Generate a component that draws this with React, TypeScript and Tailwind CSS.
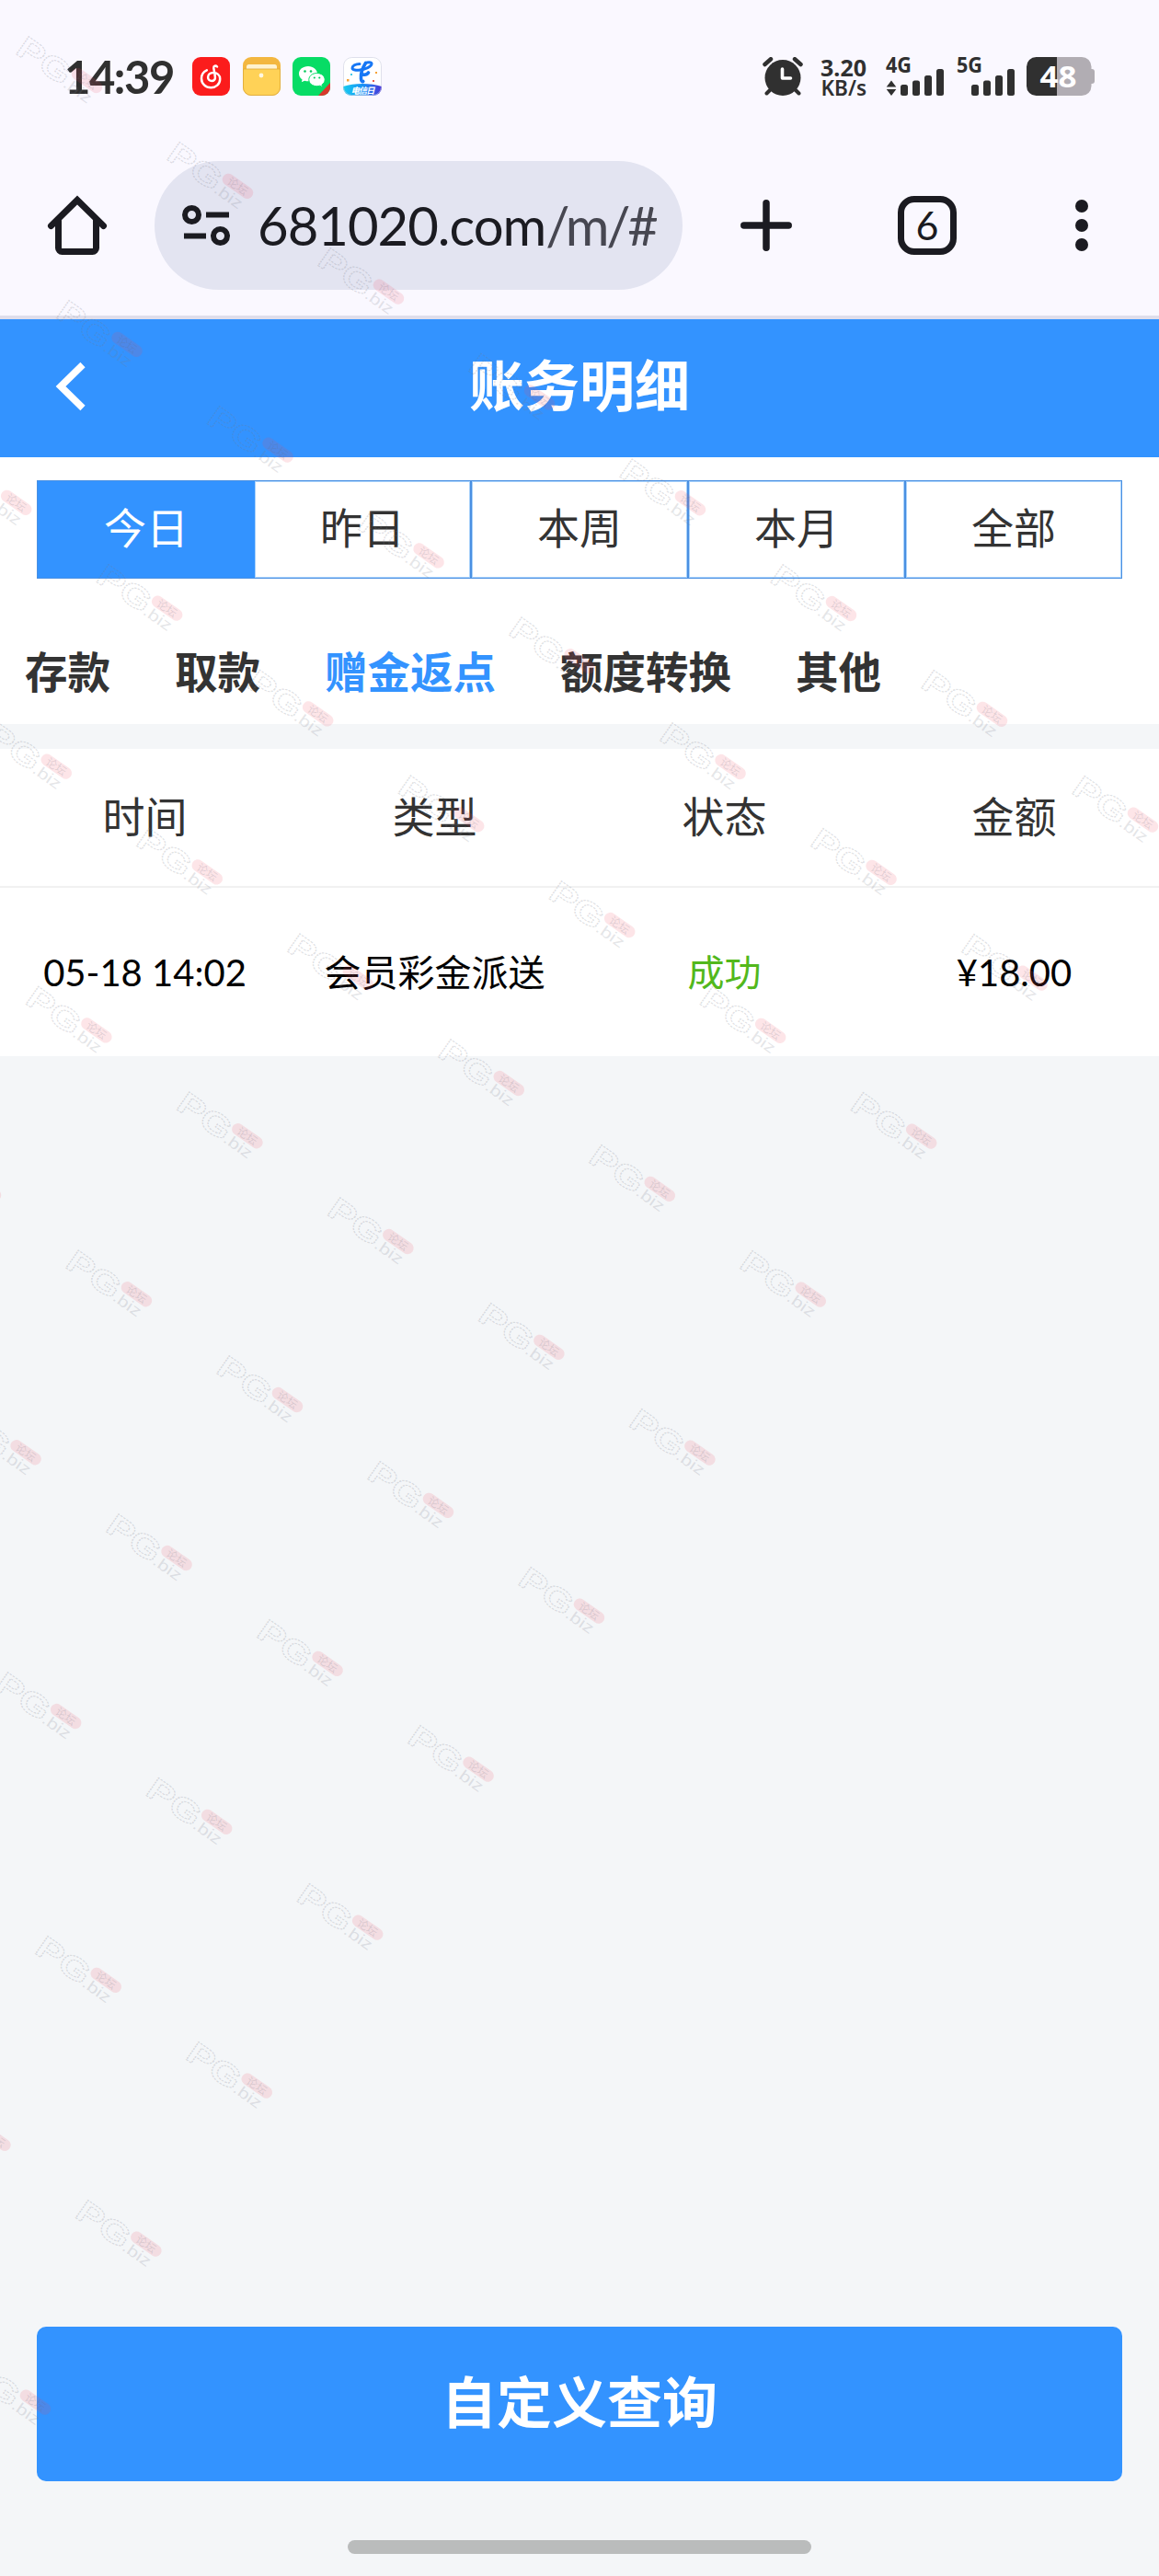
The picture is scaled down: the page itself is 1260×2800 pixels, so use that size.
import { clsx } from 'clsx'

const RANGES = ['今日', '昨日', '本周', '本月', '全部']
const CATEGORIES = ['存款', '取款', '赠金返点', '额度转换', '其他']
const COLUMNS = ['时间', '类型', '状态', '金额']

interface RecordEntry {
  time: string
  type: string
  status: string
  amount: string
}

const RECORDS: RecordEntry[] = [
  { time: '05-18 14:02', type: '会员彩金派送', status: '成功', amount: '¥18.00' },
]

// [first, last] stamp on each diagonal of the watermark
const STAMP_RUNS = [
  [0, 7], [0, 6], [-1, 5], [-1, 4], [-1, 3], [-2, 2], [-2, 1], [-2, 0], [-2, -1], [-3, -2], [-3, -3],
]

function getStamps() {
  return STAMP_RUNS.flatMap(([from, to], row) =>
    Array.from({ length: to - from + 1 }, (_, i) => ({
      x: 18 + row * 43.6 + (from + i) * 164,
      y: 38 + row * 286.8 + (from + i) * 114.8,
    })),
  )
}

function Watermark() {
  return (
    <svg
      className="absolute inset-0 pointer-events-none"
      width="1260"
      height="2800"
      viewBox="0 0 1260 2800"
      fontFamily="'Liberation Sans', 'Noto Sans CJK SC', sans-serif"
    >
      {getStamps().map(({ x, y }) => (
        <g key={`${x}-${y}`} transform={`translate(${x} ${y + 21}) rotate(35)`}>
          <g fill="none" stroke="#777b88" strokeOpacity="0.24" strokeWidth="1.2" strokeDasharray="2 1">
            <text x="-3" y="0" fontSize="34" fontWeight="700" textLength="64" lengthAdjust="spacingAndGlyphs">PG</text>
          </g>
          <rect x="60" y="-27" width="38" height="13" rx="6.5" fill="#f0465a" fillOpacity="0.14" />
          <text x="67" y="-16" fontSize="12" fill="#666b78" fillOpacity="0.2">论坛</text>
          <text x="60" y="0" fontSize="17" fill="#777b88" fillOpacity="0.2" textLength="34" lengthAdjust="spacingAndGlyphs">.biz</text>
        </g>
      ))}
    </svg>
  )
}

function MusicIcon() {
  return (
    <svg width="41" height="42" viewBox="0 0 41 42">
      <rect width="41" height="42" rx="9" fill="#fb1c1c" />
      <path
        d="M27 10.500c-1.500-1.600-4-.9-3.700 1.500l1.600 9.500c.5 3-1.600 4.500-3.800 4.500s-4-1.600-4-4c0-3.200 2.700-5 5.700-5 4.300 0 7.400 2.600 7.400 6.800 0 5.700-4.500 9.400-9.700 9.400-6.100 0-10.500-4.300-10.500-10 0-4.200 2.300-7.300 5.800-8.900"
        fill="none"
        stroke="#fff"
        strokeWidth="2.500"
        strokeLinecap="round"
      />
    </svg>
  )
}

function WalletIcon() {
  return (
    <svg width="41" height="42" viewBox="0 0 41 42">
      <rect width="41" height="42" rx="9" fill="#f3b740" />
      <rect x="4" y="8" width="33" height="10" rx="2.500" fill="#fff2cf" />
      <path d="M.5 13h40v20a8.500 8.500 0 0 1-8.500 8.500H9A8.500 8.500 0 0 1 .5 33z" fill="#ffd257" stroke="#dda93a" strokeWidth=".8" />
      <circle cx="20" cy="20" r="2.400" fill="#fff8e2" />
    </svg>
  )
}

function ChatIcon() {
  return (
    <svg width="41" height="42" viewBox="0 0 41 42">
      <defs>
        <clipPath id="chat"><rect width="41" height="42" rx="9" /></clipPath>
      </defs>
      <g clipPath="url(#chat)">
        <rect width="41" height="42" fill="#07dc65" />
        <path d="M41 28v14H28z" fill="#d8382c" />
        <path d="M17 10c-5.800 0-10 3.600-10 8.200 0 2.600 1.400 4.800 3.600 6.300l-.8 2.800 3.400-1.600c1.200.4 2.400.6 3.800.6 5.600 0 10-3.600 10-8.100S22.600 10 17 10z" fill="#fff" />
        <path d="M26.500 17.500c-5 0-8.700 3.200-8.700 7.100s3.700 7.100 8.700 7.100c1.100 0 2.200-.2 3.100-.5l3 1.500-.7-2.500c2-1.300 3.300-3.300 3.300-5.600 0-3.900-3.700-7.100-8.700-7.100z" fill="#fff" stroke="#07dc65" strokeWidth="1" />
        <g fill="#07c95c">
          <circle cx="13.500" cy="15.500" r="1.300" />
          <circle cx="20" cy="15.500" r="1.300" />
          <circle cx="23.800" cy="22.500" r="1.100" />
          <circle cx="29.300" cy="22.500" r="1.100" />
        </g>
      </g>
    </svg>
  )
}

function TelecomIcon() {
  return (
    <svg width="42" height="42" viewBox="0 0 42 42">
      <defs>
        <clipPath id="telecom"><rect width="42" height="42" rx="9" /></clipPath>
        <linearGradient id="telecomBand">
          <stop offset="0" stopColor="#16cdf0" />
          <stop offset=".55" stopColor="#1a8cf5" />
          <stop offset="1" stopColor="#4a35d8" />
        </linearGradient>
      </defs>
      <g clipPath="url(#telecom)">
        <rect width="42" height="42" fill="#fff" />
        <path d="M0 32c12-4 30-4 42 0v10H0z" fill="url(#telecomBand)" />
        <g fill="none" stroke="#1677f5" strokeLinecap="round">
          <path d="M18 7.500c-4.500 0-8 2-8 4.500 0 2.200 4.500 2.500 8.500 2 6-.8 12-3.500 12.500-6.500.2-1.600-2-2-5-1.500" strokeWidth="3" />
          <path d="M24.500 6.500c-3.500 5.500-5.500 12-5 17 .3 2.600 1.300 3.700 2.300 3M21.500 19c2.500.5 5-.5 6-2" strokeWidth="3.600" />
        </g>
        <g fill="#f6a235">
          <rect x="4" y="24" width="2.500" height="2.500" />
          <rect x="35" y="16" width="2" height="2" />
          <rect x="32" y="25" width="2" height="2" fill="#e95b4e" />
          <rect x="8" y="18" width="2" height="2" fill="#43c9e8" />
        </g>
      </g>
      <rect x=".5" y=".5" width="41" height="41" rx="9" fill="none" stroke="#c9cbe0" strokeOpacity=".6" />
      <text x="8.500" y="40.300" fontSize="9.500" fontWeight="700" fill="#fff" textLength="26" fontStyle="italic" fontFamily="'Noto Sans CJK SC', sans-serif">电信日</text>
    </svg>
  )
}

function AlarmIcon() {
  return (
    <svg width="44" height="42" viewBox="0 0 44 42">
      <g stroke="#303030" strokeLinecap="round" fill="none">
        <path d="M2.500 8 9 2.200M41.500 8 35 2.200" strokeWidth="4.500" />
        <path d="m9 35-4.500 4.500M35 35l4.500 4.500" strokeWidth="4" />
      </g>
      <circle cx="22" cy="22.500" r="19.500" fill="#303030" />
      <path d="M21.500 13v10h9" fill="none" stroke="#fff" strokeWidth="3.600" strokeLinecap="round" strokeLinejoin="round" />
    </svg>
  )
}

function Signal({ label, arrows }: { label: string; arrows?: boolean }) {
  return (
    <svg className="overflow-visible" width="66" height="44" viewBox="0 0 66 44" fill="#303030">
      <text x="0" y="16.500" fontSize="22.500" fontWeight="700" textLength="28" lengthAdjust="spacingAndGlyphs" fontFamily="'Noto Sans', sans-serif">{label}</text>
      {arrows && <path d="M6 25.500 11.300 32.500H.7zM6 42 11.300 35H.7z" />}
      <rect x="16" y="30" width="8" height="12" rx="2.500" />
      <rect x="29" y="25.500" width="8" height="16.500" rx="2.500" />
      <rect x="42" y="20" width="8" height="22" rx="2.500" />
      <rect x="55" y="13" width="8" height="29" rx="2.500" />
    </svg>
  )
}

function Battery() {
  return (
    <svg className="overflow-visible" width="74" height="42" viewBox="0 0 74 42">
      <path d="M68 13h3a3 3 0 0 1 3 3v10a3 3 0 0 1-3 3h-3z" fill="#b1adb3" />
      <path d="M33 0h27a10.500 10.500 0 0 1 10.500 10.500v21A10.500 10.500 0 0 1 60 42H33z" fill="#b1adb3" />
      <path d="M33 0H10.500A10.500 10.500 0 0 0 0 10.500v21A10.500 10.500 0 0 0 10.500 42H33z" fill="#303030" />
      <text x="14.500" y="33" fontSize="33" fontWeight="700" fill="#fff" textLength="40" lengthAdjust="spacingAndGlyphs" fontFamily="'Noto Sans', sans-serif">48</text>
    </svg>
  )
}

function StatusBar() {
  return (
    <div className="flex h-[150px] items-start pt-[62px] pl-[70px] pr-[70px]">
      <span className="w-[139px] shrink-0 font-['Lato'] text-[49px] font-bold leading-[42px] tracking-[-1.500px] text-[#303030]">14:39</span>
      <div className="flex gap-[13.500px]">
        <MusicIcon />
        <WalletIcon />
        <ChatIcon />
        <TelecomIcon />
      </div>
      <div className="ml-auto flex items-start">
        <AlarmIcon />
        <div className="ml-[17px] w-[53px] pr-[1px] text-right font-['Noto_Sans'] font-bold text-[#303030]">
          <div className="text-[25px] leading-[23px]">3.20</div>
          <div className="text-[22.500px] font-semibold leading-[22px]">KB/s</div>
        </div>
        <div className="ml-[20px]"><Signal label="4G" arrows /></div>
        <div className="ml-[11px]"><Signal label="5G" /></div>
        <div className="ml-[10px]"><Battery /></div>
      </div>
    </div>
  )
}

function BrowserBar() {
  return (
    <div className="flex h-[193px] items-start pl-[51px]">
      <svg className="mt-[62px] shrink-0" width="66" height="66" viewBox="0 0 66 66" fill="none" stroke="#1b1b21" strokeWidth="7" strokeLinecap="round">
        <path d="M4.500 33.500 33 5.500l28.500 28" />
        <path d="M12.500 28v29.500a4 4 0 0 0 4 4h33a4 4 0 0 0 4-4V28" />
      </svg>
      <div className="ml-[51px] mt-[25px] flex h-[140px] w-[574px] shrink-0 items-center rounded-full bg-[#e3e4f1] pl-[30px]">
        <svg className="shrink-0" width="54" height="44" viewBox="0 0 54 44" fill="none" stroke="#1b1b21" strokeWidth="6">
          <circle cx="10.500" cy="10.500" r="7.500" />
          <path d="M26 10.500h25M2 33.500h24" />
          <circle cx="41.500" cy="33.500" r="7.500" />
        </svg>
        <div className="ml-[28px] w-[434px] overflow-hidden whitespace-nowrap font-['Lato'] text-[58px] leading-[80px] tracking-[-1px] text-[#1b1b21]">
          681020.com<span className="tracking-[-3.200px] text-[#474751]">/m/#/</span>
        </div>
      </div>
      <svg className="ml-[62px] mt-[66px] shrink-0" width="58" height="58" viewBox="0 0 58 58" stroke="#1b1b21" strokeWidth="7.500" strokeLinecap="round">
        <path d="M29 4.800v48.400M4.800 29h48.400" />
      </svg>
      <div className="ml-[114px] mt-[63px] flex size-[64px] shrink-0 items-center justify-center rounded-[18px] border-[7px] border-[#1b1b21] pb-[2px] font-['Lato'] text-[43px] leading-none text-[#1b1b21]">
        6
      </div>
      <div className="ml-[129px] mt-[67px] flex flex-col gap-[7px]">
        <span className="size-[14px] rounded-full bg-[#1b1b21]" />
        <span className="size-[14px] rounded-full bg-[#1b1b21]" />
        <span className="size-[14px] rounded-full bg-[#1b1b21]" />
      </div>
    </div>
  )
}

export default function App() {
  return (
    <div className="relative flex h-[2800px] w-[1260px] flex-col overflow-hidden bg-[#f4f6f8] font-['Noto_Sans_CJK_SC',sans-serif]">
      <div className="h-[347px] border-b-4 border-[#dfdeeb] bg-[#faf8ff]">
        <StatusBar />
        <BrowserBar />
      </div>

      {/* Title bar */}
      <header className="grid h-[150px] grid-cols-[200px_1fr_200px] items-center bg-[#3393ff] text-white">
        <svg className="mb-[4px] ml-[60px]" width="34" height="54" viewBox="0 0 34 54" fill="none" stroke="currentColor" strokeWidth="7.500">
          <path d="M30 3.500 6 27l24 23.500" />
        </svg>
        <h1 className="pb-[12px] text-center text-[60px] font-bold leading-none">账务明细</h1>
      </header>

      {/* Filters */}
      <section className="h-[290px] bg-white pt-[25px]">
        <div className="mx-[40px] flex h-[107px] border border-[#4a90e2]">
          {RANGES.map((range, i) => (
            <button
              key={range}
              className={clsx(
                'pb-[10px] text-[46px] leading-none',
                i === 0 ? 'w-[236px] bg-[#3393ff] text-white' : 'flex-1 text-[#333] shadow-[inset_0_0_0_1px_#a9d2fb]',
                i > 1 && 'border-l-2 border-[#4a90e2]',
              )}
            >
              {range}
            </button>
          ))}
        </div>
        <nav className="flex gap-[70px] pl-[27px] pt-[76px] text-[46.500px] font-bold leading-[46px] text-[#333]">
          {CATEGORIES.map((category) => (
            <span key={category} className={clsx(category === '赠金返点' && 'text-[#3393ff]')}>
              {category}
            </span>
          ))}
        </nav>
      </section>

      {/* Records */}
      <section className="mt-[27px] bg-white">
        <div className="grid h-[151px] grid-cols-4 items-center border-b-2 border-[#f1f1f1] pb-[7px] text-center text-[46px] leading-none text-[#333]">
          {COLUMNS.map((column) => (
            <span key={column}>{column}</span>
          ))}
        </div>
        {RECORDS.map((record) => (
          <div key={record.time} className="grid h-[183px] grid-cols-4 items-center text-center text-[40px] leading-none text-black">
            <span className="font-['Lato']">{record.time}</span>
            <span className="pb-[4px]">{record.type}</span>
            <span className="pb-[4px] text-[#52b81c]">{record.status}</span>
            <span className="font-['Lato']">{record.amount}</span>
          </div>
        ))}
      </section>

      <button className="mx-[40px] mt-auto h-[168px] shrink-0 rounded-[10px] bg-[#3393ff] pb-[10px] text-[60px] font-bold leading-none text-white">
        自定义查询
      </button>
      <div className="mx-auto mb-[24px] mt-[64px] h-[15px] w-[504px] shrink-0 rounded-full bg-[#babcbc]" />

      <Watermark />
    </div>
  )
}
